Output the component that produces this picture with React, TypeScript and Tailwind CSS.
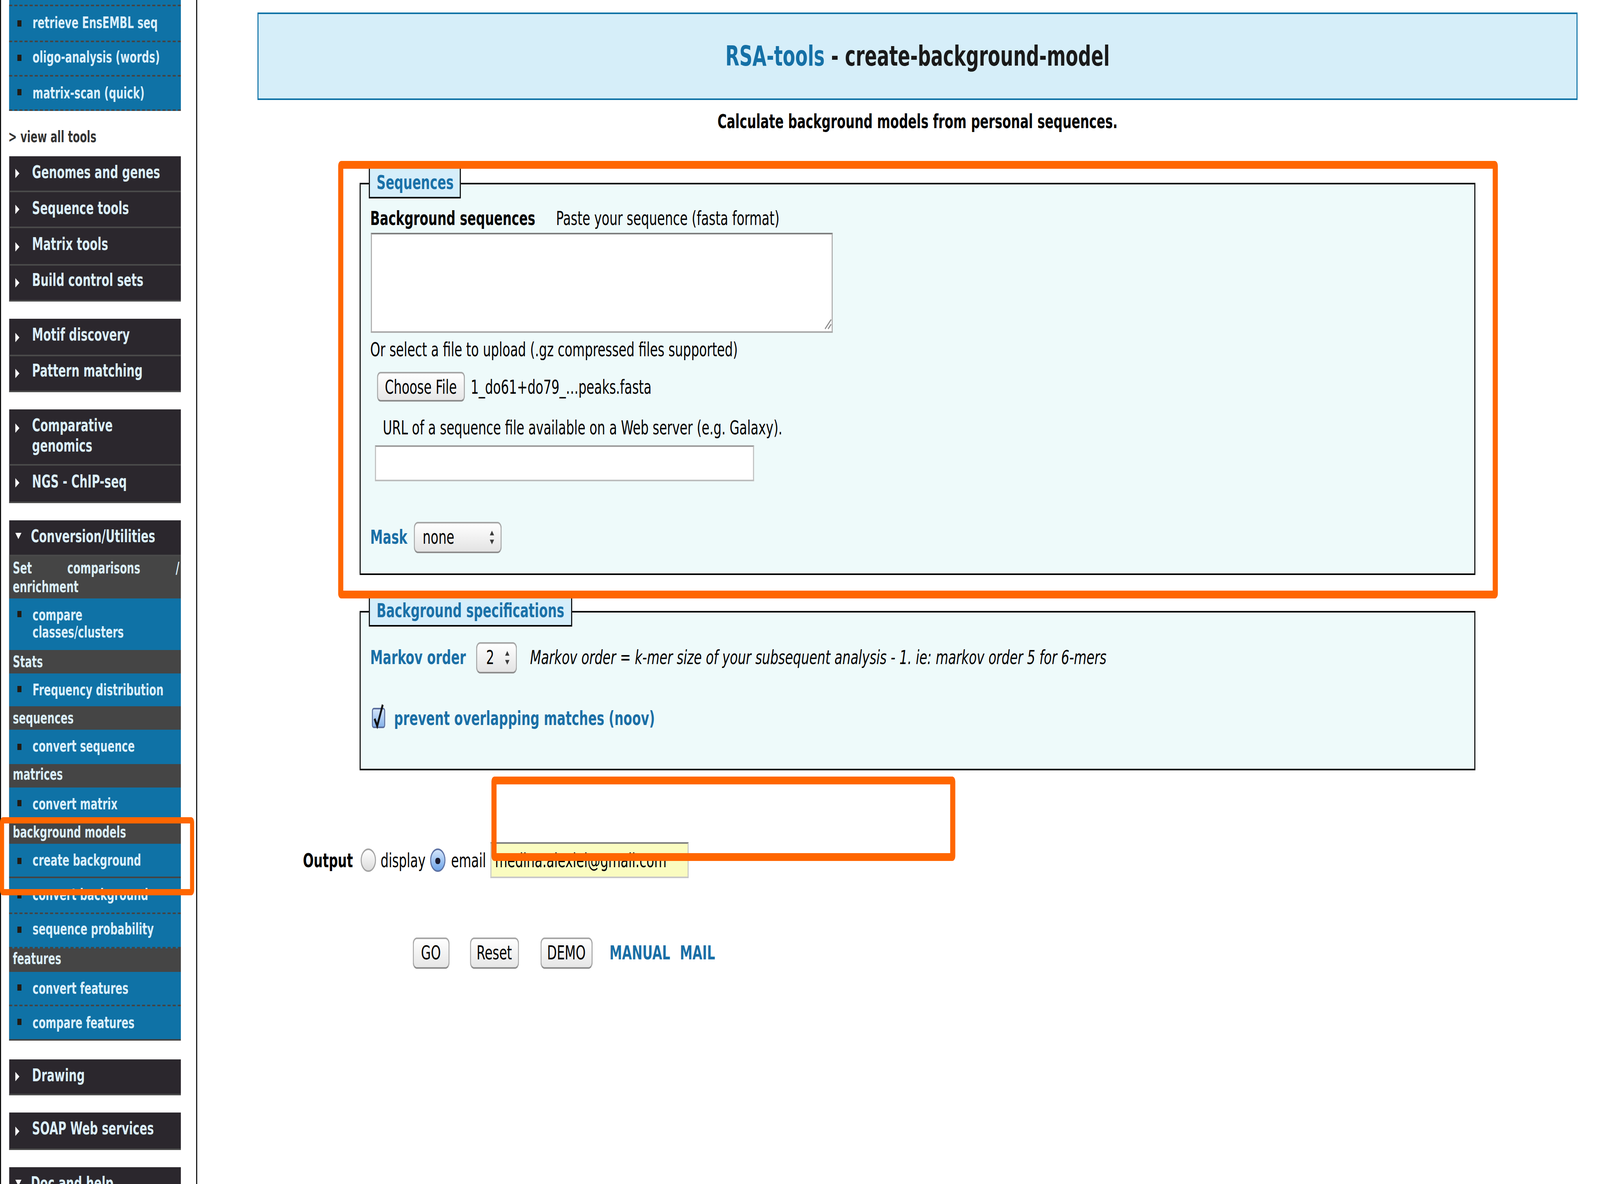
import React from "react";

function SubItem({
  label,
  edge = "dashed",
}: {
  label: React.ReactNode;
  edge?: "dashed" | "none" | "solid" | "end";
}) {
  const edgeCls =
    edge === "dashed"
      ? "border-b border-dashed border-[#444444]"
      : edge === "solid"
      ? "border-b border-solid border-[#444444]"
      : edge === "end"
      ? "border-b-[1.5px] border-solid border-[#444444]"
      : "";
  return (
    <div
      className={`flex items-start bg-[#0f72a6] py-[4.8px] text-[10px] font-bold leading-[11.6px] text-[#dbeffa] ${edgeCls}`}
    >
      <span className="ml-[8.1px] mt-[3.6px] h-[4px] w-[4px] shrink-0 bg-[#221a12]" />
      <span className="ml-[10.4px] pr-[8px]">{label}</span>
    </div>
  );
}

function GrayHead({ label }: { label: string }) {
  return (
    <div className="bg-[#454545] py-[1.8px] pl-[3.1px] pr-[1px] text-justify text-[10px] font-bold leading-[11.6px] text-[#dbeffa]">
      {label}
    </div>
  );
}

function DarkItem({ label, open = false }: { label: string; open?: boolean }) {
  return (
    <div className="flex items-start border-b border-[#4a4a4a] py-[4.775px] text-[11px] font-bold leading-[12.7px] text-[#dbeffa]">
      {open ? (
        <span className="ml-[5.6px] mt-[2.9px] h-0 w-0 shrink-0 border-x-[3.85px] border-t-[4.5px] border-x-transparent border-t-white" />
      ) : (
        <span className="ml-[5.6px] mt-[3.4px] h-0 w-0 shrink-0 border-y-[3.5px] border-l-[4.5px] border-y-transparent border-l-white" />
      )}
      <span className={open ? "ml-[9.2px] pr-[10px]" : "ml-[12.4px] pr-[10px]"}>{label}</span>
    </div>
  );
}

function Sidebar() {
  return (
    <aside className="h-full w-[192.5px] shrink-0 border-l border-r-[1.2px] border-black">
      <div className="ml-[8.4px] w-[167.2px]">
        <div className="bg-[#0f72a6]">
          <div className="h-[4.4px] border-b border-dashed border-[#444444]" />
          <SubItem label="retrieve EnsEMBL seq" />
          <SubItem label="oligo-analysis (words)" />
          <SubItem label="matrix-scan (quick)" />
        </div>
        <div className="-ml-[1.3px] pb-[6px] pt-[11.4px] text-[10px] font-bold leading-[11.6px] text-[#333333]">
          &gt; view all tools
        </div>
        <div className="bg-[#2b272d]">
          <DarkItem label="Genomes and genes" />
          <DarkItem label="Sequence tools" />
          <DarkItem label="Matrix tools" />
          <DarkItem label="Build control sets" />
        </div>
        <div className="mt-[11.5px] bg-[#2b272d]">
          <DarkItem label="Motif discovery" />
          <DarkItem label="Pattern matching" />
        </div>
        <div className="mt-[11.5px] bg-[#2b272d]">
          <DarkItem label="Comparative genomics" />
          <DarkItem label="NGS - ChIP-seq" />
        </div>
        <div className="mt-[11.5px] bg-[#2b272d]">
          <DarkItem label="Conversion/Utilities" open />
          <GrayHead label="Set comparisons / enrichment" />
          <SubItem
            label={
              <>
                compare <span className="whitespace-nowrap">classes/clusters</span>
              </>
            }
            edge="none"
          />
          <GrayHead label="Stats" />
          <SubItem label="Frequency distribution" edge="none" />
          <GrayHead label="sequences" />
          <SubItem label="convert sequence" edge="none" />
          <GrayHead label="matrices" />
          <SubItem label="convert matrix" edge="none" />
          <GrayHead label="background models" />
          <SubItem label="create background" edge="solid" />
          <SubItem label="convert background" />
          <SubItem label="sequence probability" />
          <GrayHead label="features" />
          <SubItem label="convert features" />
          <SubItem label="compare features" edge="end" />
        </div>
        <div className="mt-[11.5px] bg-[#2b272d]">
          <DarkItem label="Drawing" />
        </div>
        <div className="mt-[11.5px] bg-[#2b272d]">
          <DarkItem label="SOAP Web services" />
        </div>
        <div className="mt-[11.5px] bg-[#2b272d]">
          <DarkItem label="Doc and help" open />
        </div>
      </div>
    </aside>
  );
}

function Arrows() {
  return (
    <svg width="5" height="10" viewBox="0 0 5 10" className="mr-[6px] shrink-0">
      <path d="M2.5 0.6 L4.6 3.6 H0.4 Z M2.5 9.4 L4.6 6.4 H0.4 Z" fill="#3a3a3a" />
    </svg>
  );
}

function Radio() {
  return (
    <span className="block h-[15px] w-[15px] shrink-0 rounded-full border border-[#a3a3a3] bg-linear-to-b from-white to-[#dcdcdc]" />
  );
}

function RadioOn() {
  return (
    <span className="flex h-[15px] w-[15px] shrink-0 items-center justify-center rounded-full border border-[#5d72a4] bg-linear-to-b from-[#d3e5fb] to-[#6fa5e8]">
      <span className="h-[4.5px] w-[4.5px] rounded-full bg-[#1c1c30]" />
    </span>
  );
}

function pageTransform(): string {
  if (typeof window === "undefined") return "scale(4, 4)";
  const w = document.documentElement.clientWidth || window.innerWidth;
  const h = document.documentElement.clientHeight || window.innerHeight;
  const sx = w > 0 ? w / 1566 : 4;
  const sy = h > 0 ? h / 757.75 : 4;
  return `scale(${sx}, ${sy})`;
}

export default function App() {
  return (
    <div className="h-screen w-screen overflow-hidden bg-white">
      <div
        style={{ transform: pageTransform() }}
        className="relative h-[757.75px] w-[1566px] origin-top-left overflow-hidden bg-white font-['DejaVu_Sans',sans-serif] text-black"
      >
        <div className="flex h-full">
          <Sidebar />
          <main className="min-w-0 flex-1">
            <div className="ml-[59.1px] mt-[7.9px] flex h-[56.4px] w-[1292.9px] items-center justify-center border-[1.1px] border-[#0f72a6] bg-[#d6eef9]">
              <h1 className="text-[17.8px] font-bold leading-[22px] text-[#1a1a1a]">
                <span className="text-[#1570a6]">RSA-tools</span> - create-background-model
              </h1>
            </div>
            <p className="ml-[59.1px] mt-[5.9px] w-[1292.9px] text-center text-[12.4px] font-bold leading-[15px]">
              Calculate background models from personal sequences.
            </p>

            <fieldset className="ml-[159.2px] mt-[21.85px] w-[1092.8px] border-[1.3px] border-black bg-[#eefafa]">
              <legend className="ml-[8.4px] border-[1.2px] border-black bg-[#d6eefa] px-[6.5px] text-[12.4px] font-bold leading-[18.4px] text-[#1a71a8]">
                Sequences
              </legend>
              <div className="pb-[13.4px] pl-[9.7px] pt-[4.8px] text-[12.4px] leading-[15px]">
                <div>
                  <span className="font-bold">Background sequences</span>
                  <span className="ml-[20.3px]">Paste your sequence (fasta format)</span>
                </div>
                <div className="relative ml-[1.1px] mt-[2px] h-[63.4px] w-[452px]">
                  <textarea
                    className="block h-full w-full resize-none border border-[#a9a9a9] border-t-[#7f7f7f] bg-white outline-none"
                    defaultValue=""
                  />
                  <svg
                    className="absolute bottom-[1.5px] right-[1.5px]"
                    width="8"
                    height="8"
                    viewBox="0 0 8 8"
                  >
                    <path d="M7.5 1.5 L1.5 7.5 M7.5 4.5 L4.5 7.5" stroke="#8a8a8a" strokeWidth="0.9" />
                  </svg>
                </div>
                <div className="mt-[3.2px]">Or select a file to upload (.gz compressed files supported)</div>
                <div className="ml-[6.8px] mt-[7.3px] flex items-center">
                  <button className="flex h-[19.4px] w-[85.5px] items-center justify-center rounded-[3.5px] border border-[#a6a6a6] border-b-[#8c8c8c] bg-linear-to-b from-white to-[#e6e6e6] text-[12.4px] leading-none">
                    Choose File
                  </button>
                  <span className="ml-[6px]">1_do61+do79_…peaks.fasta</span>
                </div>
                <div className="ml-[12.3px] mt-[8.7px]">
                  URL of a sequence file available on a Web server (e.g. Galaxy).
                </div>
                <input
                  className="ml-[4.8px] mt-[4.2px] block h-[22.8px] w-[371px] border border-[#bdbdbd] border-t-[#9c9c9c] bg-white outline-none"
                  defaultValue=""
                />
                <div className="mt-[26.2px] flex items-center">
                  <span className="font-bold text-[#1a6fa6]">Mask</span>
                  <div className="ml-[6px] flex h-[19.3px] w-[86px] items-center rounded-[4px] border border-[#a6a6a6] border-b-[#8e8e8e] bg-linear-to-b from-white to-[#e3e3e3] pl-[8px]">
                    <span className="flex-1">none</span>
                    <Arrows />
                  </div>
                </div>
              </div>
            </fieldset>

            <fieldset className="ml-[159.2px] mt-[13px] w-[1092.8px] border-[1.3px] border-black bg-[#eefafa]">
              <legend className="ml-[8.4px] border-[1.2px] border-black bg-[#d6eefa] px-[6.5px] text-[12.4px] font-bold leading-[18.4px] text-[#1a71a8]">
                Background specifications
              </legend>
              <div className="pb-[25.1px] pl-[9.7px] pt-[9.85px] text-[12.4px] leading-[15px]">
                <div className="flex h-[19.3px] items-center">
                  <span className="font-bold text-[#1a6fa6]">Markov order</span>
                  <div className="ml-[9.8px] flex h-[19.3px] w-[40.3px] items-center rounded-[4px] border border-[#a6a6a6] border-b-[#8e8e8e] bg-linear-to-b from-white to-[#e3e3e3] pl-[9px]">
                    <span className="flex-1">2</span>
                    <Arrows />
                  </div>
                  <span className="ml-[12.7px] text-[12.6px] italic">
                    Markov order = k-mer size of your subsequent analysis - 1. ie: markov order 5 for 6-mers
                  </span>
                </div>
                <div className="mt-[21.55px] flex h-[15px] items-center">
                  <span className="relative ml-[1.3px] block h-[13px] w-[13px] shrink-0 rounded-[2px] border border-[#5a6e9e] bg-linear-to-b from-[#d3e4fa] to-[#86b3ea]">
                    <svg
                      className="absolute left-[-1px] top-[-4px] overflow-visible"
                      width="13"
                      height="16"
                      viewBox="0 0 13 16"
                    >
                      <path d="M2.6 10 L5.2 14.6 L10.6 1" fill="none" stroke="#111111" strokeWidth="1.8" />
                    </svg>
                  </span>
                  <span className="ml-[9px] font-bold text-[#1a6fa6]">prevent overlapping matches (noov)</span>
                </div>
              </div>
            </fieldset>

            <div className="ml-[104px] mt-[46.1px] flex h-[23px] items-center text-[12.4px]">
              <span className="font-bold">Output</span>
              <span className="ml-[7.1px]">
                <Radio />
              </span>
              <span className="ml-[5px]">display</span>
              <span className="ml-[4.5px]">
                <RadioOn />
              </span>
              <span className="ml-[5.5px]">email</span>
              <input
                readOnly
                value="medina.alexiel@gmail.com"
                className="ml-[4.8px] h-[23px] w-[194px] border border-[#c8c8c8] border-t-[1.5px] border-t-[#7d7d7d] bg-[#fafcc0] pl-[3px] text-[12.4px] outline-none"
              />
            </div>

            <div className="ml-[211.5px] mt-[37.5px] flex items-center text-[12.4px]">
              <button className="flex h-[20px] w-[35.5px] items-center justify-center rounded-[4px] border border-[#a6a6a6] border-b-[#8c8c8c] bg-linear-to-b from-white to-[#e6e6e6] leading-none">
                GO
              </button>
              <button className="ml-[20px] flex h-[20px] w-[48.5px] items-center justify-center rounded-[4px] border border-[#a6a6a6] border-b-[#8c8c8c] bg-linear-to-b from-white to-[#e6e6e6] leading-none">
                Reset
              </button>
              <button className="ml-[20.7px] flex h-[20px] w-[51.3px] items-center justify-center rounded-[4px] border border-[#a6a6a6] border-b-[#8c8c8c] bg-linear-to-b from-white to-[#e6e6e6] leading-none">
                DEMO
              </button>
              <span className="ml-[16.5px] font-bold text-[#1a6fa6]">MANUAL</span>
              <span className="ml-[9.5px] font-bold text-[#1a6fa6]">MAIL</span>
            </div>
          </main>
        </div>

        <div className="pointer-events-none absolute left-[330.5px] top-[103px] h-[280px] w-[1135px] rounded-[3px] border-[5px] border-[#ff6600]" />
        <div className="pointer-events-none absolute left-[481px] top-[497.4px] h-[54.1px] w-[454px] rounded-[3px] border-[5px] border-[#ff6600]" />
        <div className="pointer-events-none absolute left-0 top-[522.7px] h-[50.3px] w-[190.2px] rounded-[3px] border-[4px] border-[#ff6600]" />
      </div>
    </div>
  );
}
